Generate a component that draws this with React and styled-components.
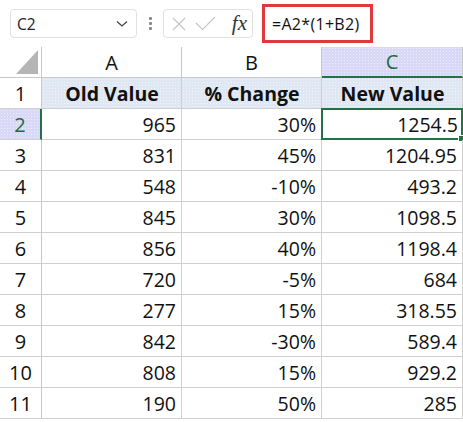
import React from "react";
import styled, { createGlobalStyle, css } from "styled-components";

const GlobalStyle = createGlobalStyle`
  body {
    margin: 0;
    background: #ffffff;
    font-family: "Open Sans", "Liberation Sans", sans-serif;
  }
`;

const Page = styled.div`
  width: 463px;
  height: 422px;
  overflow: hidden;
  background: #fff;
`;

const Toolbar = styled.div`
  height: 47px;
  display: flex;
  align-items: center;
  padding-left: 10px;
  box-sizing: border-box;
`;

const NameBox = styled.div`
  width: 127px;
  height: 29px;
  box-sizing: border-box;
  border: 1px solid #e1e1e1;
  border-radius: 4px;
  display: flex;
  align-items: center;
  justify-content: space-between;
  padding: 0 8px 0 6px;
  font-size: 15.5px;
  color: #222;
`;

const Dots = styled.div`
  width: 26px;
  display: flex;
  flex-direction: column;
  align-items: center;
  gap: 2px;
  span {
    width: 3px;
    height: 3px;
    background: #8a8a8a;
    border-radius: 1px;
  }
`;

const FxBox = styled.div`
  width: 90px;
  height: 29px;
  box-sizing: border-box;
  border: 1px solid #e1e1e1;
  border-radius: 4px;
  display: flex;
  align-items: center;
  padding: 0 5px 0 7px;
  gap: 8px;
`;

const FxText = styled.span`
  font-family: "Liberation Serif", "DejaVu Serif", serif;
  font-style: italic;
  font-size: 21px;
  color: #333;
  margin-left: auto;
`;

const FormulaBox = styled.div`
  margin-left: 9px;
  width: 111px;
  height: 39px;
  box-sizing: border-box;
  border: 3px solid #e0393b;
  display: flex;
  align-items: center;
  padding-left: 7px;
  font-size: 16px;
  letter-spacing: 0.3px;
  color: #111;
`;

const Grid = styled.div`
  display: grid;
  grid-template-columns: 42px 140px 140px 141px;
  grid-auto-rows: 31px;
`;

const hatch = (c) => css`
  background-color: ${c};
  background-image: radial-gradient(rgba(255, 255, 255, 0.55) 0.6px, transparent 0.8px);
  background-size: 3px 3px;
`;

const Corner = styled.div`
  border-right: 1px solid #c8c8c8;
  border-bottom: 1px solid #c8c8c8;
  box-sizing: border-box;
  position: relative;
  &::after {
    content: "";
    position: absolute;
    right: 3px;
    bottom: 3px;
    width: 0;
    height: 0;
    border-left: 22px solid transparent;
    border-bottom: 24px solid #b5b5b5;
  }
`;

const ColHead = styled.div`
  box-sizing: border-box;
  border-right: 1px solid #c8c8c8;
  border-bottom: ${(p) => (p.$active ? "2px solid #217346" : "1px solid #c8c8c8")};
  display: flex;
  align-items: center;
  justify-content: center;
  font-size: 20px;
  color: ${(p) => (p.$active ? "#1d6b40" : "#111")};
  ${(p) => (p.$active ? hatch("#d9d9f7") : "background: #fff;")}
`;

const RowHead = styled.div`
  box-sizing: border-box;
  border-right: ${(p) => (p.$active ? "2px solid #217346" : "1px solid #c8c8c8")};
  border-bottom: 1px solid #d0d0d0;
  display: flex;
  align-items: center;
  justify-content: center;
  font-size: 20px;
  color: ${(p) => (p.$active ? "#1d6b40" : "#111")};
  ${(p) => (p.$active ? hatch("#d9d9f7") : "background: #fff;")}
`;

const Cell = styled.div`
  box-sizing: border-box;
  border-right: 1px solid #d0d0d0;
  border-bottom: 1px solid #d0d0d0;
  display: flex;
  align-items: center;
  justify-content: ${(p) => (p.$head ? "center" : "flex-end")};
  padding-right: 5px;
  padding-left: ${(p) => (p.$head ? "6px" : "0")};
  font-size: 19.5px;
  font-weight: ${(p) => (p.$head ? 700 : 400)};
  color: #111;
  position: relative;
  ${(p) => p.$head && hatch("#dfe7f3")}
  ${(p) =>
    p.$selected &&
    css`
      border: 2px solid #217346;
      margin: -1px 0 0 -1px;
      padding-right: 3px;
      &::after {
        content: "";
        position: absolute;
        right: -4px;
        bottom: -4px;
        width: 5px;
        height: 5px;
        background: #217346;
        border: 1px solid #fff;
      }
    `}
`;

const rows = [
  [965, "30%", "1254.5"],
  [831, "45%", "1204.95"],
  [548, "-10%", "493.2"],
  [845, "30%", "1098.5"],
  [856, "40%", "1198.4"],
  [720, "-5%", "684"],
  [277, "15%", "318.55"],
  [842, "-30%", "589.4"],
  [808, "15%", "929.2"],
  [190, "50%", "285"],
];

const Chevron = () => (
  <svg width="12" height="8" viewBox="0 0 12 8">
    <path d="M1 1.5 L6 6 L11 1.5" fill="none" stroke="#444" strokeWidth="1.3" />
  </svg>
);

const Cross = () => (
  <svg width="16" height="16" viewBox="0 0 16 16">
    <path d="M2 2 L14 14 M14 2 L2 14" stroke="#c4c4c4" strokeWidth="1.1" />
  </svg>
);

const Check = () => (
  <svg width="21" height="15" viewBox="0 0 21 15">
    <path d="M1 7 L7.5 13.5 L20 1" fill="none" stroke="#c4c4c4" strokeWidth="1.1" />
  </svg>
);

export default function App() {
  return (
    <Page>
      <GlobalStyle />
      <Toolbar>
        <NameBox>
          C2
          <Chevron />
        </NameBox>
        <Dots>
          <span />
          <span />
          <span />
        </Dots>
        <FxBox>
          <Cross />
          <Check />
          <FxText>fx</FxText>
        </FxBox>
        <FormulaBox>=A2*(1+B2)</FormulaBox>
      </Toolbar>
      <Grid>
        <Corner />
        <ColHead>A</ColHead>
        <ColHead>B</ColHead>
        <ColHead $active>C</ColHead>

        <RowHead>1</RowHead>
        <Cell $head>Old Value</Cell>
        <Cell $head>% Change</Cell>
        <Cell $head>New Value</Cell>

        {rows.map((r, i) => (
          <React.Fragment key={i}>
            <RowHead $active={i === 0}>{i + 2}</RowHead>
            <Cell>{r[0]}</Cell>
            <Cell>{r[1]}</Cell>
            <Cell $selected={i === 0}>{r[2]}</Cell>
          </React.Fragment>
        ))}
      </Grid>
    </Page>
  );
}
